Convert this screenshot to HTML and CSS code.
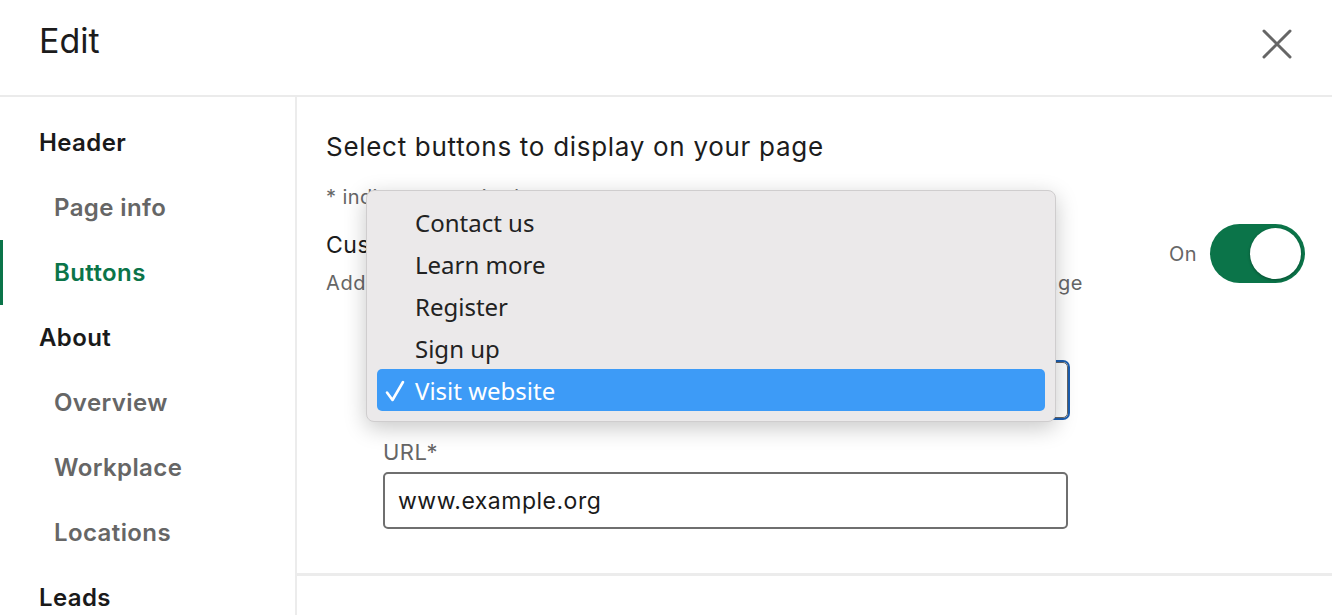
FILE: index.html
```html
<!DOCTYPE html>
<html lang="en">
<head>
<meta charset="utf-8">
<title>Edit</title>
<link rel="stylesheet" href="styles.css">
</head>
<body>
<div class="modal">
  <header class="modal-header">
    <h1 class="modal-title">Edit</h1>
    <button class="close-btn" aria-label="Close">
      <svg width="34" height="34" viewBox="0 0 34 34"><path d="M4 4 L30 30 M30 4 L4 30" stroke="#666" stroke-width="3" stroke-linecap="round" fill="none"/></svg>
    </button>
  </header>
  <div class="modal-body">
    <nav class="sidebar">
      <div class="nav-group">Header</div>
      <div class="nav-item">Page info</div>
      <div class="nav-item active">Buttons</div>
      <div class="nav-group">About</div>
      <div class="nav-item">Overview</div>
      <div class="nav-item">Workplace</div>
      <div class="nav-item">Locations</div>
      <div class="nav-group">Leads</div>
    </nav>
    <main class="content">
      <section class="section">
        <h2 class="section-title">Select buttons to display on your page</h2>
        <p class="required-note">* indicates required</p>
        <div class="toggle-row">
          <div class="toggle-text">
            <div class="toggle-label">Custom button</div>
            <div class="toggle-desc">Add a custom button to help your visitors take the next step with your page</div>
          </div>
          <div class="toggle-ctrl">
            <span class="toggle-state">On</span>
            <span class="switch"><span class="knob"></span></span>
          </div>
        </div>
        <div class="fields">
          <label class="field-label">Button*</label>
          <div class="select-wrap">
            <div class="select">Visit website</div>
            <div class="menu">
              <div class="menu-item">Contact us</div>
              <div class="menu-item">Learn more</div>
              <div class="menu-item">Register</div>
              <div class="menu-item">Sign up</div>
              <div class="menu-item selected"><svg class="check" width="20" height="22" viewBox="0 0 20 22"><path d="M2 12.5 L7.5 20 L18 2" stroke="#fff" stroke-width="2.6" stroke-linecap="round" stroke-linejoin="round" fill="none"/></svg>Visit website</div>
            </div>
          </div>
          <label class="field-label url-label">URL*</label>
          <div class="input">www.example.org</div>
        </div>
      </section>
      <div class="section-next"></div>
    </main>
  </div>
</div>
</body>
</html>
```

FILE: styles.css
```css
* { box-sizing: border-box; }
html, body { margin: 0; padding: 0; }
body {
  font-family: Inter, "Noto Sans", "Liberation Sans", sans-serif;
  background: #fff;
  color: #1a1a1a;
  width: 1332px;
  height: 615px;
  overflow: hidden;
}
.modal-header {
  height: 97px;
  border-bottom: 2px solid #ebebeb;
  display: flex;
  align-items: flex-start;
  justify-content: space-between;
  padding: 0 38px 0 39px;
}
.modal-title {
  margin: 19px 0 0;
  font-size: 34px;
  font-weight: 400;
  line-height: 44px;
  color: #1c1c1c;
}
.close-btn {
  margin-top: 27px;
  background: none;
  border: 0;
  padding: 0;
  width: 34px;
  height: 34px;
}
.modal-body {
  display: flex;
  height: 518px;
}
.sidebar {
  width: 297px;
  flex: none;
  border-right: 2px solid #ececec;
  padding-top: 13px;
}
.nav-group, .nav-item {
  height: 65px;
  display: flex;
  align-items: center;
  font-size: 24px;
  font-weight: 600;
  letter-spacing: 0.4px;
}
.nav-group { padding-left: 39px; color: #1a1a1a; }
.nav-item { padding-left: 54px; color: #666; }
.nav-item.active {
  color: #0b7449;
  box-shadow: inset 3px 0 0 #0b7449;
}
.content {
  flex: 1;
  display: flex;
  flex-direction: column;
}
.section {
  padding: 32px 27px 0 29px;
  height: 479px;
  border-bottom: 3px solid #ececec;
}
.section-title {
  margin: 0;
  font-size: 26px;
  font-weight: 400;
  line-height: 36px;
  letter-spacing: 0.7px;
  color: #1c1c1c;
}
.required-note {
  margin: 19px 0 0;
  font-size: 20px;
  line-height: 26px;
  letter-spacing: 0.4px;
  color: #666;
}
.toggle-row {
  display: flex;
  justify-content: space-between;
  align-items: flex-start;
  margin-top: 18px;
}
.toggle-label {
  font-size: 23px;
  line-height: 34px;
  letter-spacing: 0.5px;
  color: #1c1c1c;
}
.toggle-desc {
  margin-top: 7px;
  font-size: 20px;
  line-height: 28px;
  letter-spacing: 0.65px;
  white-space: nowrap;
  color: #666;
}
.toggle-ctrl {
  display: flex;
  align-items: center;
  gap: 13px;
  margin-top: -4px;
}
.toggle-state { font-size: 20px; color: #666; letter-spacing: 0.4px; }
.switch {
  width: 95px;
  height: 59px;
  border-radius: 30px;
  background: #0b7449;
  position: relative;
  display: block;
}
.knob {
  position: absolute;
  right: 4px;
  top: 4px;
  width: 51px;
  height: 51px;
  border-radius: 50%;
  background: #fff;
  box-shadow: 0 1px 3px rgba(0,0,0,0.35);
}
.fields {
  margin-left: 57px;
  width: 685px;
  margin-top: 33px;
}
.field-label {
  display: block;
  font-size: 22px;
  line-height: 30px;
  letter-spacing: 0.5px;
  color: #666;
}
.select-wrap {
  position: relative;
  margin-top: 2px;
}
.select {
  height: 56px;
  border: 1px solid #666;
  border-radius: 5px;
  box-shadow: 0 0 0 2px #1d5fb0;
  padding: 0 14px;
  display: flex;
  align-items: center;
  font-size: 23px;
  color: #1a1a1a;
}
.url-label { margin-top: 19px; }
.input {
  margin-top: 5px;
  height: 57px;
  border: 2px solid #6f6f6f;
  border-radius: 5px;
  padding: 0 13px;
  display: flex;
  align-items: center;
  font-size: 23px;
  letter-spacing: 0.5px;
  color: #1a1a1a;
}
.menu {
  position: absolute;
  left: -17px;
  top: -172px;
  width: 690px;
  background: #ebe9ea;
  border: 1px solid #cfcdce;
  border-radius: 8px;
  box-shadow: 0 6px 22px rgba(0,0,0,0.22);
  padding: 10px;
  font-family: "Noto Sans", Inter, "Liberation Sans", sans-serif;
}
.menu-item {
  height: 42px;
  display: flex;
  align-items: center;
  padding-left: 38px;
  font-size: 24px;
  color: #222;
  position: relative;
}
.menu-item.selected {
  background: #3d9bf7;
  color: #fff;
  border-radius: 5px;
}
.check {
  position: absolute;
  left: 8px;
  top: 11px;
}
```
